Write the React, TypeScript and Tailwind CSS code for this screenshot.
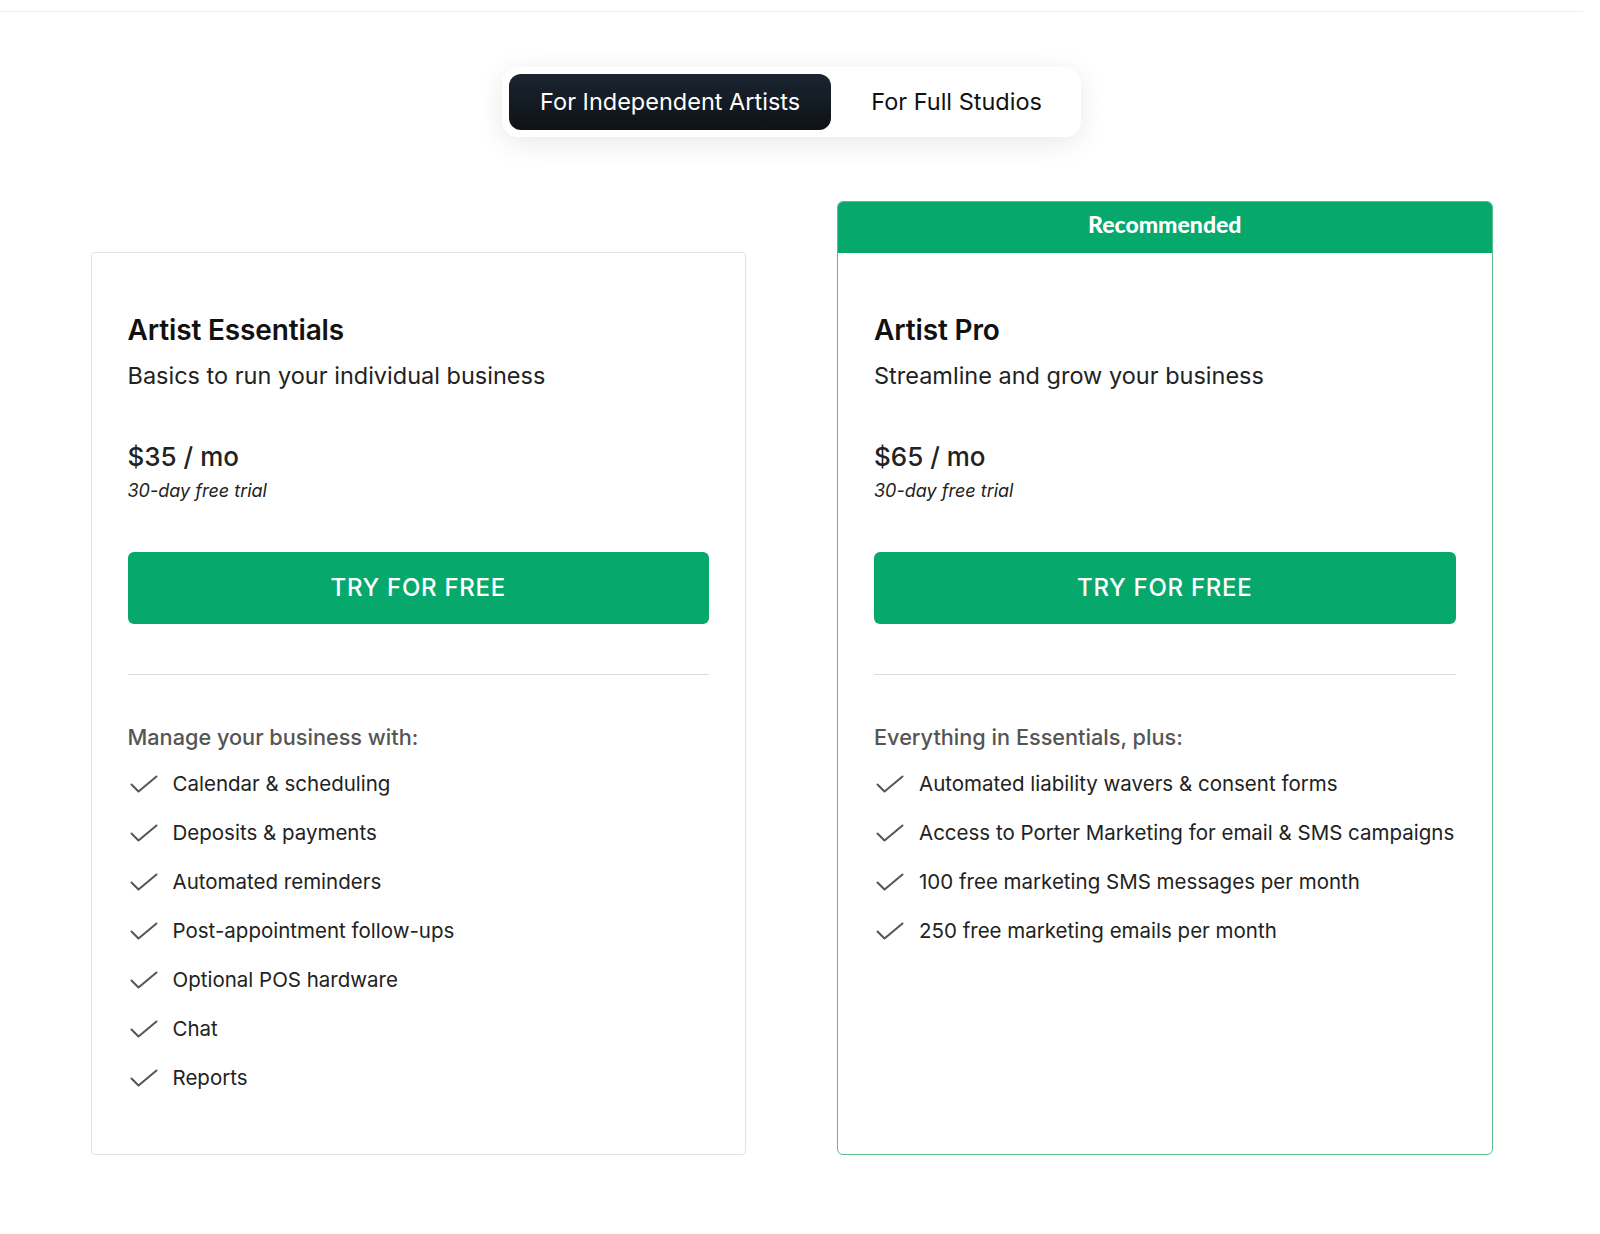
import React from "react";

const Check = () => (
  <svg width="28" height="18" viewBox="0 0 28 18" fill="none" className="shrink-0">
    <polyline points="1.5,9.5 8.5,16.5 26.5,1.5" stroke="#555555" strokeWidth="2" strokeLinecap="round" strokeLinejoin="round" />
  </svg>
);

type Plan = {
  title: string;
  subtitle: string;
  price: string;
  heading: string;
  features: string[];
};

const PlanBody = ({ plan }: { plan: Plan }) => (
  <div className="flex flex-col px-[36px] pb-[62px]">
    <h2 className="text-[28px] leading-[34px] font-semibold text-[#111111] tracking-[-0.005em]">{plan.title}</h2>
    <p className="mt-[15px] text-[23.5px] leading-[28px] text-[#222222]">{plan.subtitle}</p>
    <div className="mt-[50px] text-[26px] leading-[34px] font-medium text-[#222222]">{plan.price}</div>
    <div className="mt-[5px] text-[18px] leading-[24px] italic text-[#222222]">30-day free trial</div>
    <button className="mt-[49px] h-[72px] w-full rounded-[6px] bg-[#06a86c] text-white text-[24px] font-medium tracking-[0.03em]">
      TRY FOR FREE
    </button>
    <div className="mt-[50px] border-t border-[#dcdcdc]" />
    <div className="mt-[48px] text-[21.7px] leading-[28px] font-medium text-[#555555]">{plan.heading}</div>
    <ul className="mt-[19px] flex flex-col gap-[21px]">
      {plan.features.map((f) => (
        <li key={f} className="flex items-center gap-[15px] h-[28px] pl-[2px] text-[20.5px] text-[#222222] whitespace-nowrap">
          <Check />
          <span>{f}</span>
        </li>
      ))}
    </ul>
  </div>
);

export default function App() {
  const essentials: Plan = {
    title: "Artist Essentials",
    subtitle: "Basics to run your individual business",
    price: "$35 / mo",
    heading: "Manage your business with:",
    features: [
      "Calendar & scheduling",
      "Deposits & payments",
      "Automated reminders",
      "Post-appointment follow-ups",
      "Optional POS hardware",
      "Chat",
      "Reports",
    ],
  };
  const pro: Plan = {
    title: "Artist Pro",
    subtitle: "Streamline and grow your business",
    price: "$65 / mo",
    heading: "Everything in Essentials, plus:",
    features: [
      "Automated liability wavers & consent forms",
      "Access to Porter Marketing for email & SMS campaigns",
      "100 free marketing SMS messages per month",
      "250 free marketing emails per month",
    ],
  };

  return (
    <div className="min-h-screen bg-white pr-[17px] font-['Inter',sans-serif]">
      <div className="h-[12px] border-b border-[#f0f0f0]" />
      <div className="mt-[55px] flex justify-center">
        <div className="flex gap-[8px] p-[7px] rounded-[16px] bg-white shadow-[0_6px_28px_rgba(0,0,0,0.09)]">
          <button className="h-[56px] px-[31px] rounded-[12px] bg-gradient-to-b from-[#1a2531] to-[#0f1216] text-white text-[23.5px]">
            For Independent Artists
          </button>
          <button className="h-[56px] px-[32px] rounded-[12px] text-[#111111] text-[23.5px]">
            For Full Studios
          </button>
        </div>
      </div>

      <div className="mx-auto mt-[64px] w-[1402px] grid grid-cols-2 gap-[91px]">
        <div className="flex flex-col pt-[51px]">
          <div className="flex-1 border border-[#e2e2e2] rounded-[4px] pt-[60px] bg-white">
            <PlanBody plan={essentials} />
          </div>
        </div>
        <div className="flex flex-col border border-[#5cbc8e] rounded-[6px] overflow-hidden bg-white">
          <div className="h-[51px] pb-[6px] bg-[#06a86c] flex items-center justify-center text-white text-[23px] font-black font-['Lato',sans-serif]">
            Recommended
          </div>
          <div className="flex-1 pt-[60px]">
            <PlanBody plan={pro} />
          </div>
        </div>
      </div>
    </div>
  );
}
